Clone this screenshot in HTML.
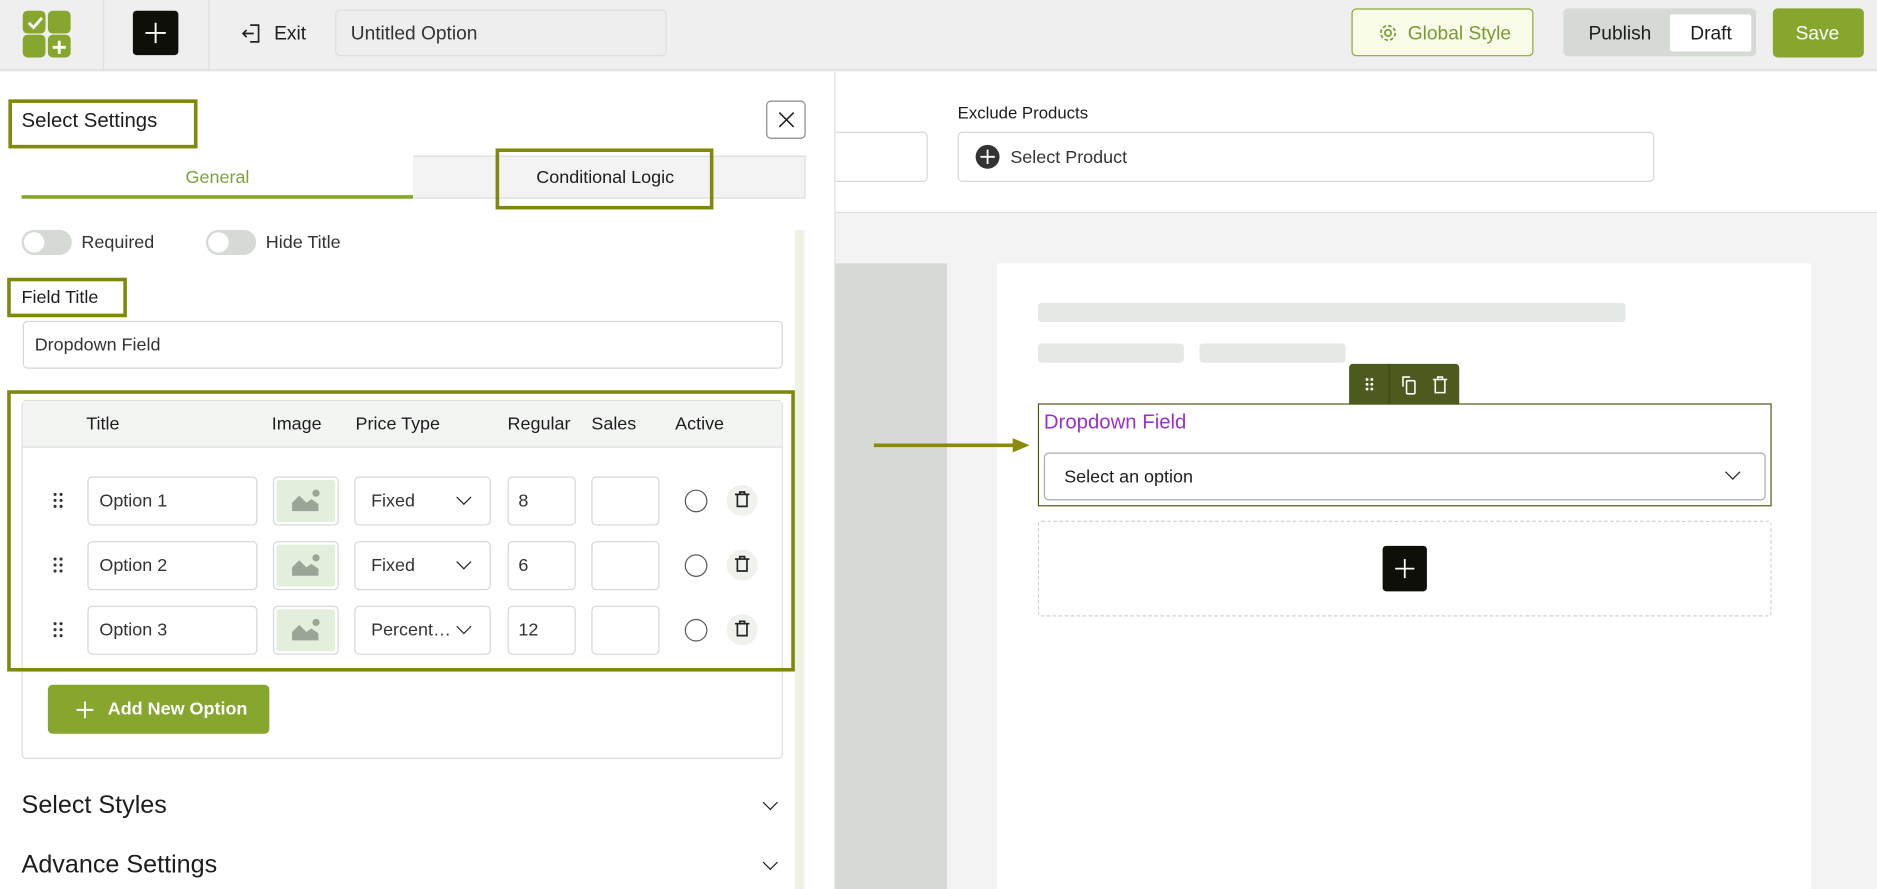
<!DOCTYPE html>
<html><head><meta charset="utf-8"><style>
*{box-sizing:border-box;margin:0;padding:0}
html,body{width:1877px;height:889px;overflow:hidden;background:#fff}
#w{position:absolute;left:0;top:0;width:1568px;height:743px;transform:scale(1.19707);transform-origin:0 0;font-family:"Liberation Sans",sans-serif;color:#1d1d1d;overflow:hidden;background:#f2f3f2}
.a{position:absolute}
.t{position:absolute;white-space:nowrap;line-height:1}
.hl{position:absolute;border:3px solid #7f8a0a}
.inp{position:absolute;border:1px solid #d6d6d6;border-radius:4px;background:#fff}
.chev{position:absolute;width:9px;height:9px;border-right:1.6px solid #222;border-bottom:1.6px solid #222;transform:rotate(45deg)}
</style></head><body><div id="w">
<div class="a" style="left:0;top:0;width:1568px;height:59px;background:#efefef;border-bottom:1px solid #ddd"></div>
<div class="a" style="left:19px;top:9px;width:19px;height:19px;background:#86a62d;border-radius:4px"></div>
<div class="a" style="left:40px;top:9px;width:19px;height:19px;background:#86a62d;border-radius:4px"></div>
<div class="a" style="left:19px;top:29px;width:19px;height:19px;background:#86a62d;border-radius:4px"></div>
<div class="a" style="left:40px;top:29px;width:19px;height:19px;background:#86a62d;border-radius:4px"></div>
<svg class="a" style="left:19px;top:9px" width="40" height="40"><path d="M5 10l4 4 7-8" stroke="#fff" stroke-width="2.4" fill="none"/><path d="M30.5 25v11M25 30.5h11" stroke="#fff" stroke-width="2.4"/></svg>
<div class="a" style="left:86px;top:0;width:1px;height:59px;background:#ddd"></div>
<div class="a" style="left:111px;top:9px;width:38px;height:37px;background:#0e0f08;border-radius:3px"></div>
<svg class="a" style="left:111px;top:9px" width="38" height="37"><path d="M19 10v17M10.5 18.5h17" stroke="#fff" stroke-width="1.6"/></svg>
<div class="a" style="left:174px;top:0;width:1px;height:59px;background:#ddd"></div>
<svg class="a" style="left:200px;top:18px" width="20" height="20"><path d="M9 3h7v14H9M12 10H3M6 7l-3 3 3 3" stroke="#222" stroke-width="1.4" fill="none"/></svg>
<div class="t" style="left:229px;top:21px;font-size:16px">Exit</div>
<div class="a" style="left:280px;top:8px;width:277px;height:39px;background:#eee;border:1px solid #ddd;border-radius:4px"></div>
<div class="t" style="left:293px;top:21px;font-size:16px;color:#333">Untitled Option</div>
<div class="a" style="left:1129px;top:7px;width:152px;height:40px;background:#f8fce8;border:1px solid #8ba83a;border-radius:4px"></div>
<svg class="a" style="left:1151px;top:19px" width="17" height="17"><circle cx="8.5" cy="8.5" r="2.6" stroke="#7a9a35" stroke-width="1.4" fill="none"/><circle cx="8.5" cy="8.5" r="6" stroke="#7a9a35" stroke-width="1.4" fill="none" stroke-dasharray="3 1.7"/></svg>
<div class="t" style="left:1176px;top:21px;font-size:16px;color:#7a9a35">Global Style</div>
<div class="a" style="left:1306px;top:7px;width:161px;height:40px;background:#d5dad5;border-radius:4px"></div>
<div class="a" style="left:1395px;top:12px;width:68px;height:31px;background:#fff;border-radius:2px"></div>
<div class="t" style="left:1327px;top:21px;font-size:16px">Publish</div>
<div class="t" style="left:1412px;top:21px;font-size:16px">Draft</div>
<div class="a" style="left:1481px;top:7px;width:76px;height:41px;background:#86a62d;border-radius:4px"></div>
<div class="t" style="left:1500px;top:21px;font-size:16px;color:#fff">Save</div>
<div class="a" style="left:698px;top:60px;width:870px;height:118px;background:#fff;border-bottom:1px solid #ddd"></div>
<div class="inp" style="left:680px;top:110px;width:95px;height:42px"></div>
<div class="t" style="left:800px;top:87px;font-size:14px">Exclude Products</div>
<div class="inp" style="left:800px;top:110px;width:582px;height:42px"></div>
<div class="a" style="left:815px;top:121px;width:20px;height:20px;border-radius:50%;background:#333"></div>
<svg class="a" style="left:815px;top:121px" width="20" height="20"><path d="M10 4v12M4 10h12" stroke="#fff" stroke-width="1.5"/></svg>
<div class="t" style="left:844px;top:124px;font-size:15px;color:#333">Select Product</div>
<div class="a" style="left:698px;top:220px;width:93px;height:523px;background:#d5dad5"></div>
<div class="a" style="left:833px;top:220px;width:680px;height:523px;background:#fff"></div>
<div class="a" style="left:867px;top:253px;width:491px;height:16px;background:#e5e9e5;border-radius:3px"></div>
<div class="a" style="left:867px;top:287px;width:122px;height:16px;background:#e5e9e5;border-radius:3px"></div>
<div class="a" style="left:1002px;top:287px;width:122px;height:16px;background:#e5e9e5;border-radius:3px"></div>
<div class="a" style="left:1127px;top:304px;width:92px;height:34px;background:#4d5a1e;border-radius:3px 3px 0 0"></div>
<div class="a" style="left:1160px;top:304px;width:1px;height:33px;background:#3a4514"></div>
<svg class="a" style="left:1127px;top:304px" width="92" height="34"><g fill="#fff"><circle cx="15" cy="13" r="1.2"/><circle cx="19" cy="13" r="1.2"/><circle cx="15" cy="17" r="1.2"/><circle cx="19" cy="17" r="1.2"/><circle cx="15" cy="21" r="1.2"/><circle cx="19" cy="21" r="1.2"/></g><g stroke="#fff" stroke-width="1.3" fill="none"><path d="M45 19v-8h6"/><rect x="48" y="14" width="7" height="11" rx="1"/><path d="M70 13h12M72 13v11h8V13M74 13v-2h4v2"/></g></svg>
<div class="a" style="left:867px;top:337px;width:613px;height:86px;border:1px solid #4a5a1a"></div>
<div class="t" style="left:872px;top:344px;font-size:17px;color:#9b30d0">Dropdown Field</div>
<div class="a" style="left:872px;top:378px;width:603px;height:40px;border:1px solid #aaa;border-radius:4px"></div>
<div class="t" style="left:889px;top:391px;font-size:15px">Select an option</div>
<div class="chev" style="left:1443px;top:390px"></div>
<div class="a" style="left:867px;top:435px;width:613px;height:80px;border:1px dashed #ccc;border-radius:3px"></div>
<div class="a" style="left:1155px;top:456px;width:37px;height:38px;background:#0e0f08;border-radius:3px"></div>
<svg class="a" style="left:1155px;top:456px" width="37" height="38"><path d="M18.5 11v16M10.5 19h16" stroke="#fff" stroke-width="1.5"/></svg>
<svg class="a" style="left:728px;top:364px" width="135" height="16"><path d="M2 8h118" stroke="#8a8a10" stroke-width="3"/><path d="M118 2l14 6-14 6z" fill="#8a8a10"/></svg>
<div class="a" style="left:0;top:60px;width:698px;height:683px;background:#fff;border-right:1px solid #ddd"></div>
<div class="hl" style="left:7px;top:83px;width:158px;height:41px"></div>
<div class="t" style="left:18px;top:92px;font-size:17px">Select Settings</div>
<div class="a" style="left:640px;top:84px;width:33px;height:32px;border:1px solid #888;border-radius:4px"></div>
<svg class="a" style="left:640px;top:84px" width="33" height="32"><path d="M11 10l12 12M23 10L11 22" stroke="#222" stroke-width="1.3"/></svg>
<div class="a" style="left:18px;top:130px;width:655px;height:36px;background:#f2f3f2;border:1px solid #ddd"></div>
<div class="a" style="left:18px;top:130px;width:327px;height:36px;background:#fff;border-bottom:3px solid #86a62d"></div>
<div class="t" style="left:155px;top:141px;font-size:15px;color:#7fa03a">General</div>
<div class="t" style="left:448px;top:141px;font-size:15px">Conditional Logic</div>
<div class="hl" style="left:414px;top:124px;width:182px;height:51px"></div>
<div class="a" style="left:664px;top:192px;width:8px;height:551px;background:#eef3e4"></div>
<div class="a" style="left:18px;top:192px;width:42px;height:21px;background:#d5dad5;border-radius:11px"></div>
<div class="a" style="left:20px;top:194px;width:17px;height:17px;background:#fff;border-radius:50%"></div>
<div class="t" style="left:68px;top:195px;font-size:15px;color:#333">Required</div>
<div class="a" style="left:172px;top:192px;width:42px;height:21px;background:#d5dad5;border-radius:11px"></div>
<div class="a" style="left:174px;top:194px;width:17px;height:17px;background:#fff;border-radius:50%"></div>
<div class="t" style="left:222px;top:195px;font-size:15px;color:#333">Hide Title</div>
<div class="hl" style="left:6px;top:232px;width:100px;height:33px"></div>
<div class="t" style="left:18px;top:241px;font-size:15px">Field Title</div>
<div class="inp" style="left:19px;top:268px;width:635px;height:40px"></div>
<div class="t" style="left:29px;top:281px;font-size:15px;color:#333">Dropdown Field</div>
<div class="a" style="left:18px;top:334px;width:636px;height:300px;border:1px solid #ddd;border-radius:4px"></div>
<div class="a" style="left:19px;top:335px;width:634px;height:39px;background:#f3f5f3;border-bottom:1px solid #ddd"></div>
<div class="t" style="left:72px;top:347px;font-size:15px">Title</div>
<div class="t" style="left:227px;top:347px;font-size:15px">Image</div>
<div class="t" style="left:297px;top:347px;font-size:15px">Price Type</div>
<div class="t" style="left:424px;top:347px;font-size:15px">Regular</div>
<div class="t" style="left:494px;top:347px;font-size:15px">Sales</div>
<div class="t" style="left:564px;top:347px;font-size:15px">Active</div>
<div class="hl" style="left:6px;top:326px;width:658px;height:235px"></div>
<div id="rows"></div>
<div class="a" style="left:40px;top:572px;width:185px;height:41px;background:#86a62d;border-radius:4px"></div>
<svg class="a" style="left:62px;top:584px" width="18" height="18"><path d="M9 2v14M2 9h14" stroke="#fff" stroke-width="1.6"/></svg>
<div class="t" style="left:90px;top:585px;font-size:15px;color:#fff;font-weight:bold">Add New Option</div>
<div class="t" style="left:18px;top:662px;font-size:21px">Select Styles</div>
<div class="chev" style="left:639px;top:666px"></div>
<div class="t" style="left:18px;top:712px;font-size:21px">Advance Settings</div>
<div class="chev" style="left:639px;top:716px"></div>
<script>
var r=[["Option 1","Fixed","8",398],["Option 2","Fixed","6",452],["Option 3","Percent…","12",506]],h="";
r.forEach(function(o){var y=o[3];
h+='<svg class="a" style="left:44px;top:'+(y+13)+'px" width="10" height="14"><g fill="#333"><circle cx="2" cy="2" r="1.3"/><circle cx="7" cy="2" r="1.3"/><circle cx="2" cy="7" r="1.3"/><circle cx="7" cy="7" r="1.3"/><circle cx="2" cy="12" r="1.3"/><circle cx="7" cy="12" r="1.3"/></g></svg>';
h+='<div class="inp" style="left:73px;top:'+y+'px;width:142px;height:41px"></div><div class="t" style="left:83px;top:'+(y+13)+'px;font-size:15px;color:#333">'+o[0]+'</div>';
h+='<div class="inp" style="left:228px;top:'+y+'px;width:55px;height:41px"></div><div class="a" style="left:231px;top:'+(y+3)+'px;width:49px;height:35px;background:#e3efdc;border-radius:2px"></div>';
h+='<svg class="a" style="left:243px;top:'+(y+10)+'px" width="26" height="20"><path d="M1 19V12l6-6 6 6 4-3 6 4v6z" fill="#9aa597"/><circle cx="21" cy="4" r="3" fill="#9aa597"/></svg>';
h+='<div class="inp" style="left:296px;top:'+y+'px;width:114px;height:41px"></div><div class="t" style="left:310px;top:'+(y+13)+'px;font-size:15px;color:#333">'+o[1]+'</div><div class="chev" style="left:383px;top:'+(y+13)+'px"></div>';
h+='<div class="inp" style="left:424px;top:'+y+'px;width:57px;height:41px"></div><div class="t" style="left:433px;top:'+(y+13)+'px;font-size:15px;color:#333">'+o[2]+'</div>';
h+='<div class="inp" style="left:494px;top:'+y+'px;width:57px;height:41px"></div>';
h+='<div class="a" style="left:572px;top:'+(y+11)+'px;width:19px;height:19px;border:1px solid #555;border-radius:50%"></div>';
h+='<div class="a" style="left:607px;top:'+(y+7)+'px;width:26px;height:26px;background:#f0f2ee;border-radius:50%"></div>';
h+='<svg class="a" style="left:607px;top:'+(y+7)+'px" width="26" height="26"><path d="M7 8h12M9 8v10h8V8M11 8V6h4v2" stroke="#222" stroke-width="1.4" fill="none"/></svg>';
});document.getElementById("rows").outerHTML=h;
</script>
</div></body></html>
